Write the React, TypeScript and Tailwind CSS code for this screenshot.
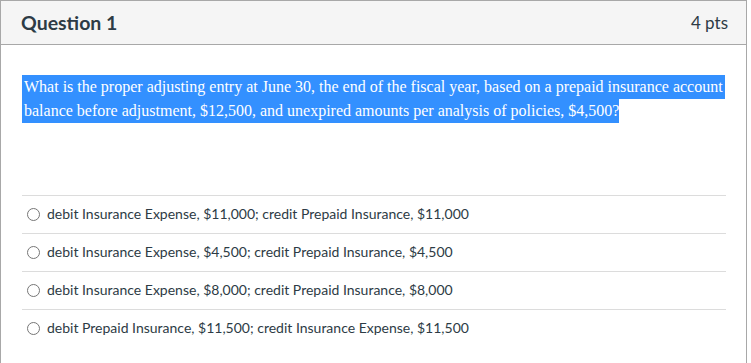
const answers = [
  "debit Insurance Expense, $11,000; credit Prepaid Insurance, $11,000",
  "debit Insurance Expense, $4,500; credit Prepaid Insurance, $4,500",
  "debit Insurance Expense, $8,000; credit Prepaid Insurance, $8,000",
  "debit Prepaid Insurance, $11,500; credit Insurance Expense, $11,500",
]

export default function App() {
  return (
    <div className="w-[751px] h-[363px] bg-white overflow-hidden font-['Lato','Liberation_Sans',sans-serif] text-[#2d3b45]">
      <div className="w-[747px] h-[380px] border border-[#a8a8a8]">
        {/* header */}
        <div className="h-[44px] bg-[#f5f5f5] border-b border-[#a8a8a8] flex items-center justify-between pl-5 pr-[18px]">
          <h2 className="text-[19.5px] font-bold text-[#2d3b45]">Question 1</h2>
          <span className="text-[17px] text-[#2d3b45]">4 pts</span>
        </div>

        <div className="pl-[21px] pr-5 pt-[30px]">
          {/* selected question text */}
          <div className="font-['Liberation_Serif','Times_New_Roman',serif] text-[16px] leading-[24px] text-white">
            <div className="w-[703px] bg-[#3390ff] pl-[2px] whitespace-nowrap">
              What is the proper adjusting entry at June 30, the end of the fiscal year, based on a prepaid insurance account
            </div>
            <div className="w-fit bg-[#3390ff] pl-[2px] whitespace-nowrap">
              balance before adjustment, $12,500, and unexpired amounts per analysis of policies, $4,500?
            </div>
          </div>

          {/* answers */}
          <div className="mt-[72px] w-[704px]">
            {answers.map((a) => (
              <label key={a} className="h-[38px] border-t border-[#dcdcdc] flex items-center gap-[7px] pl-[5px] pb-[1px]">
                <span className="w-[13px] h-[13px] rounded-full border border-[#767676] bg-white shrink-0" />
                <span className="text-[14px] leading-none">{a}</span>
              </label>
            ))}
          </div>
        </div>
      </div>
    </div>
  )
}
